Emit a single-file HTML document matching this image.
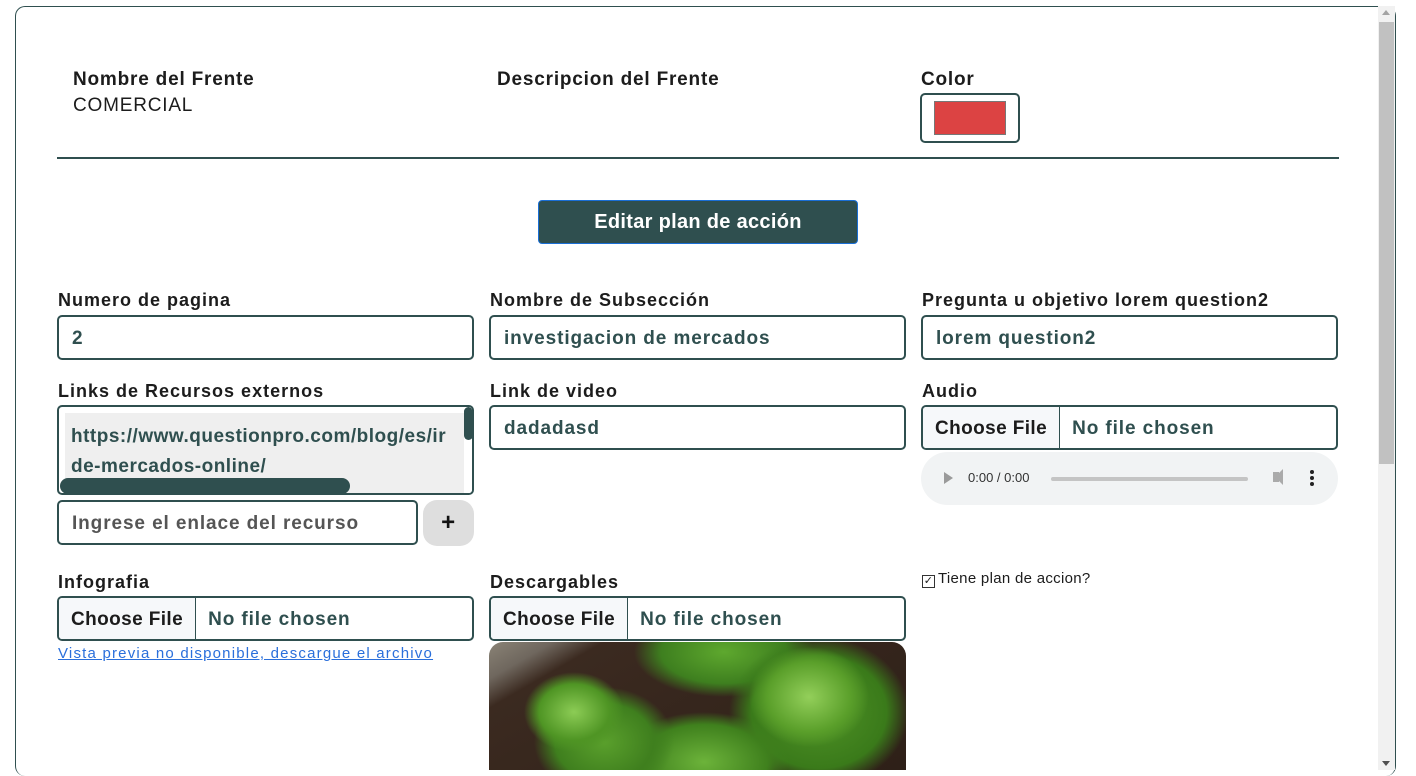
<!DOCTYPE html>
<html><head><meta charset="utf-8"><style>
*{box-sizing:border-box;margin:0;padding:0}
body{width:1416px;height:770px;background:#fff;font-family:"Liberation Sans",sans-serif;overflow:hidden;position:relative;color:#1c1c1c;letter-spacing:0.8px}
.frame{position:absolute;left:15px;top:6px;width:1381px;height:770px;border:1px solid #2f4f4f;border-radius:10px;border-bottom:none;overflow:hidden;background:#fff}
.sb{position:absolute;left:1378px;top:6px;width:17px;height:764px;background:#f1f1f1}
.sb .th{position:absolute;left:1px;top:16px;width:15px;height:442px;background:#c1c1c1}
.sb .up{position:absolute;top:4px;left:4px;width:0;height:0;border-left:4px solid transparent;border-right:4px solid transparent;border-bottom:5px solid #a3a3a3}
.sb .dn{position:absolute;bottom:4px;left:4px;width:0;height:0;border-left:4px solid transparent;border-right:4px solid transparent;border-top:5px solid #505050}
.a{position:absolute}
.h{font-size:19px;font-weight:bold;color:#1c1c1c}
.lbl{font-size:18px;font-weight:bold;color:#1c1c1c;letter-spacing:1px}
.inp{position:absolute;height:45px;border:2px solid #2f4f4f;border-radius:5px;font-size:19px;font-weight:bold;color:#2f4f4f;padding:0 13px;line-height:43px;background:#fff;letter-spacing:0.9px;white-space:nowrap}
.file{position:absolute;height:45px;border:2px solid #2f4f4f;border-radius:5px;font-size:19px;font-weight:bold;color:#2f4f4f;display:flex;overflow:hidden;background:#fff;letter-spacing:0.4px}
.file .b{background:#f6f8fa;color:#1c1c1c;border-right:1px solid #2f4f4f;padding:0 12px;line-height:43px}
.file .t{padding-left:12px;line-height:43px;letter-spacing:0.9px}
</style></head><body>
<div class="frame"></div>
<div class="sb"><div class="up"></div><div class="th"></div><div class="dn"></div></div>

<div class="a h" style="left:73px;top:69px">Nombre del Frente</div>
<div class="a" style="left:73px;top:95px;font-size:19px;color:#1c1c1c">COMERCIAL</div>
<div class="a h" style="left:497px;top:69px">Descripcion del Frente</div>
<div class="a h" style="left:921px;top:69px">Color</div>
<div class="a" style="left:920px;top:93px;width:100px;height:50px;border:2px solid #2f4f4f;border-radius:5px"><div style="position:absolute;left:12px;top:6px;width:72px;height:34px;background:#dc4343;border:1px solid #777"></div></div>
<div class="a" style="left:57px;top:157px;width:1282px;height:2px;background:#2f4f4f"></div>

<div class="a" style="left:538px;top:200px;width:320px;height:44px;background:#2f4f4f;border:1px solid #1a6fd6;border-radius:4px;color:#fff;font-weight:bold;font-size:20px;text-align:center;line-height:43px;letter-spacing:0.3px">Editar plan de acción</div>

<div class="a lbl" style="left:58px;top:290px">Numero de pagina</div>
<div class="a lbl" style="left:490px;top:290px">Nombre de Subsección</div>
<div class="a lbl" style="left:922px;top:290px">Pregunta u objetivo lorem question2</div>
<div class="inp" style="left:57px;top:315px;width:417px">2</div>
<div class="inp" style="left:489px;top:315px;width:417px">investigacion de mercados</div>
<div class="inp" style="left:921px;top:315px;width:417px">lorem question2</div>

<div class="a lbl" style="left:58px;top:381px">Links de Recursos externos</div>
<div class="a lbl" style="left:490px;top:381px">Link de video</div>
<div class="a lbl" style="left:922px;top:381px">Audio</div>

<div class="a" style="left:57px;top:405px;width:417px;height:90px;border:2px solid #2f4f4f;border-radius:5px;overflow:hidden">
 <div style="position:absolute;left:6px;top:6px;width:400px;height:84px;background:#efefef;font-size:19px;font-weight:bold;color:#2f4f4f;padding:9px 0 0 6px;line-height:30px;white-space:nowrap;overflow:hidden;letter-spacing:0.5px">https://www.questionpro.com/blog/es/ir<br>de-mercados-online/</div>
 <div style="position:absolute;left:405px;top:0;width:10px;height:86px;background:#fff"></div>
 <div style="position:absolute;left:405px;top:0;width:9px;height:33px;background:#2f4f4f;border-radius:5px"></div>
 <div style="position:absolute;left:1px;top:71px;width:290px;height:16px;background:#2f4f4f;border-radius:8px"></div>
</div>
<div class="inp" style="left:57px;top:500px;width:361px;font-weight:bold;color:#555">Ingrese el enlace del recurso</div>
<div class="a" style="left:423px;top:500px;width:51px;height:46px;background:#dedede;border-radius:14px;text-align:center;line-height:46px;font-size:24px;font-weight:bold;color:#111">+</div>

<div class="inp" style="left:489px;top:405px;width:417px">dadadasd</div>
<div class="file" style="left:921px;top:405px;width:417px"><div class="b">Choose File</div><div class="t">No file chosen</div></div>
<div class="a" style="left:921px;top:452px;width:417px;height:53px;background:#f1f3f4;border-radius:27px;letter-spacing:0">
 <div style="position:absolute;left:23px;top:20px;width:0;height:0;border-top:6px solid transparent;border-bottom:6px solid transparent;border-left:9px solid #9a9a9a"></div>
 <div style="position:absolute;left:47px;top:18px;font-size:13px;color:#333">0:00 / 0:00</div>
 <div style="position:absolute;left:130px;top:25px;width:197px;height:4px;background:#c4c4c4;border-radius:2px"></div>
 <div style="position:absolute;left:352px;top:20px;width:6px;height:10px;background:#aaa"></div>
 <div style="position:absolute;left:352px;top:17px;width:0;height:0;border-top:8px solid transparent;border-bottom:8px solid transparent;border-right:8px solid #aaa;margin-left:2px"></div>
 <div style="position:absolute;left:389px;top:18px;width:4px;height:4px;background:#222;border-radius:2px;box-shadow:0 6px 0 #222,0 12px 0 #222"></div>
</div>

<div class="a" style="left:922px;top:570px;font-size:15px;color:#1c1c1c;letter-spacing:0.3px"><span style="display:inline-block;width:13px;height:13px;border:1px solid #333;vertical-align:-1px;font-size:11px;line-height:11px;text-align:center;margin-right:3px">✓</span>Tiene plan de accion?</div>

<div class="a lbl" style="left:58px;top:572px">Infografia</div>
<div class="a lbl" style="left:490px;top:572px">Descargables</div>
<div class="file" style="left:57px;top:596px;width:417px"><div class="b">Choose File</div><div class="t">No file chosen</div></div>
<div class="file" style="left:489px;top:596px;width:417px"><div class="b">Choose File</div><div class="t">No file chosen</div></div>
<div class="a" style="left:58px;top:645px;font-size:15px;color:#2a6fdb;text-decoration:underline;letter-spacing:1.2px">Vista previa no disponible, descargue el archivo</div>

<div class="a" style="left:489px;top:642px;width:417px;height:128px;border-radius:14px 14px 0 0;overflow:hidden;background:
radial-gradient(ellipse 50px 40px at 85px 70px,#8ccc55 0,#4f9524 70%,transparent 100%),
radial-gradient(ellipse 70px 55px at 115px 100px,#5aa02c 0,#3f7f1e 70%,transparent 100%),
radial-gradient(ellipse 85px 50px at 215px 120px,#6cb33a 0,#3f801d 75%,transparent 100%),
radial-gradient(ellipse 60px 50px at 320px 55px,#93cf5a 0,#5a9f2a 70%,transparent 100%),
radial-gradient(ellipse 90px 75px at 330px 70px,#4f9226 0,#3a7a1a 75%,transparent 100%),
radial-gradient(ellipse 90px 45px at 235px 10px,#5ea82e 0,#3e7f1f 70%,transparent 100%),
linear-gradient(150deg,#8a8376 0,#6f675e 10%,#3b2a20 18%,#2e2018 100%)"></div>
</body></html>
